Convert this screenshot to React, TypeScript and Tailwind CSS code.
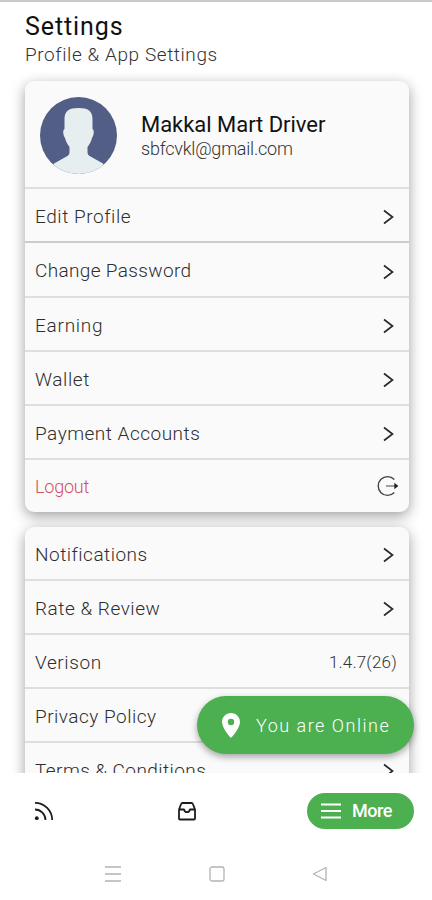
import React from "react";
import clsx from "clsx";

interface Row {
  label: string;
  tracking: string;
  height: string;
  kind?: "link" | "logout" | "version";
  divider?: string;
}

const accountRows: Row[] = [
  { label: "Edit Profile", tracking: "tracking-[0.56px]", height: "h-[54px]", divider: "border-[#cbcbcb]" },
  { label: "Change Password", tracking: "tracking-[0.35px]", height: "h-[55px]" },
  { label: "Earning", tracking: "tracking-[0.75px]", height: "h-[54px]" },
  { label: "Wallet", tracking: "tracking-[0.6px]", height: "h-[54px]" },
  { label: "Payment Accounts", tracking: "tracking-[0.5px]", height: "h-[54px]" },
  { label: "Logout", tracking: "tracking-[-0.2px]", height: "h-[52px]", kind: "logout", divider: "border-transparent" },
];

const appRows: Row[] = [
  { label: "Notifications", tracking: "tracking-[0.5px]", height: "h-[54px]" },
  { label: "Rate & Review", tracking: "tracking-[0.53px]", height: "h-[54px]" },
  { label: "Verison", tracking: "tracking-[0.6px]", height: "h-[54px]", kind: "version" },
  { label: "Privacy Policy", tracking: "tracking-[0.5px]", height: "h-[54px]" },
  { label: "Terms & Conditions", tracking: "tracking-[0.43px]", height: "h-[54px]" },
];

const Chevron = () => (
  <svg className="mr-[14px] h-4 w-3" viewBox="0 0 12 16" fill="none" stroke="#2a2a2a" strokeWidth="1.7">
    <path d="M1 1.5 9.5 8 1 14.5" />
  </svg>
);

const LogoutIcon = () => (
  <svg className="mr-[10px] h-[22px] w-[22px]" viewBox="0 0 22 22" fill="none" stroke="#444" strokeWidth="1.4">
    <path d="M17.3 4.4A9.4 9.4 0 1 0 17.3 17.6" />
    <path d="M9 11h10" strokeWidth="1.1" />
    <path d="M17.3 7.8 21.4 11l-4.1 3.2z" fill="#222" stroke="none" />
  </svg>
);

const SettingsRow = ({ label, tracking, height, kind = "link", divider = "border-[#dedede]" }: Row) => (
  <div
    className={clsx(
      "flex items-center justify-between border-b-2 pl-[10px]",
      kind === "logout" ? "pt-[2px]" : "pt-[4px]",
      height,
      divider
    )}
  >
    <span
      className={clsx(
        "font-light whitespace-nowrap",
        tracking,
        kind === "logout" ? "text-[18px] text-[#d4505c]" : "text-[19px] text-[#2e2e2e]"
      )}
    >
      {label}
    </span>
    {kind === "link" && <Chevron />}
    {kind === "logout" && <LogoutIcon />}
    {kind === "version" && (
      <span className="mr-[12px] text-[17px] font-light tracking-[0.2px] text-[#333]">1.4.7(26)</span>
    )}
  </div>
);

const card = "mr-[23px] ml-[25px] overflow-hidden rounded-[9px] bg-[#fafafa] shadow-[0_4px_14px_rgba(0,0,0,0.38)]";

export default function App() {
  return (
    <div className="relative flex h-[900px] w-[432px] flex-col overflow-hidden bg-white font-['Roboto','Liberation_Sans',sans-serif]">
      <main className="h-[773px] overflow-hidden border-t-2 border-[#cacaca]">
        <header className="h-[79px] pt-[9px] pl-[25px]">
          <h1 className="text-[25px] leading-[32px] tracking-[0.9px] text-[#111]">Settings</h1>
          <p className="text-[19px] leading-[24px] font-light tracking-[0.58px] text-[#333]">Profile &amp; App Settings</p>
        </header>

        <section className={card}>
          <div className="flex h-[108px] border-b-2 border-[#dedede] pt-[16px] pl-[15px]">
            <svg className="h-[77px] w-[77px]" viewBox="0 0 77 77">
              <defs>
                <clipPath id="avatar">
                  <circle cx="38.5" cy="38.5" r="38.5" />
                </clipPath>
              </defs>
              <g clipPath="url(#avatar)">
                <rect width="77" height="77" fill="#525e86" />
                <path
                  d="M38.5 11C29 11 24.5 14 24.5 22v10c-2 1-1.500 6 .5 9 1 4 2.500 6.500 4.500 9v5c0 2-1 3.500-3 4.500L14 66.500 10 77h57l-4-10.500L50.500 59.500c-2-1-3-2.500-3-4.500v-5c2-2.500 3.500-5 4.500-9 2-3 2.500-8 .5-9V22c0-8-4.500-11-14-11z"
                  fill="#e6eeef"
                />
              </g>
            </svg>
            <div className="pt-[15px] pl-[24px]">
              <p className="text-[22px] leading-[26px] tracking-[-0.03px] text-[#111]">Makkal Mart Driver</p>
              <p className="text-[18px] leading-[22px] font-light tracking-[-0.22px] text-[#333]">sbfcvkl@gmail.com</p>
            </div>
          </div>
          {accountRows.map((row) => (
            <SettingsRow key={row.label} {...row} />
          ))}
        </section>

        <section className={clsx(card, "mt-[15px]")}>
          {appRows.map((row) => (
            <SettingsRow key={row.label} {...row} />
          ))}
        </section>
      </main>

      {/* Floating status pill */}
      <div className="absolute top-[696px] left-[197px] flex h-[58px] w-[217px] items-center rounded-full bg-[#4caf50] pl-[25px] text-white shadow-[0_3px_7px_rgba(0,0,0,0.35)]">
        <svg className="h-[25px] w-[18px]" viewBox="0 0 18 25" fill="currentColor" fillRule="evenodd">
          <path d="M9 0C4 0 0 4 0 9c0 6.500 9 16 9 16s9-9.500 9-16c0-5-4-9-9-9zm0 5.800a3.200 3.200 0 1 1 0 6.400 3.200 3.200 0 0 1 0-6.400z" />
        </svg>
        <span className="ml-[16px] text-[18px] font-light tracking-[1.5px] whitespace-nowrap">You are Online</span>
      </div>

      <nav className="relative flex h-[75px] items-center justify-between bg-white pr-[18px] pl-[34px]">
        <svg className="h-[20px] w-[20px]" viewBox="0 0 20 20" fill="none" stroke="#1c1c1c" strokeWidth="1.8">
          <path d="M1 1.8c9.500 0 17.200 7.700 17.200 17.200M1 8.500c5.800 0 10.500 4.700 10.500 10.500" />
          <circle cx="2.8" cy="17.2" r="1.9" fill="#1c1c1c" stroke="none" />
        </svg>
        <svg className="ml-[12px] h-[20px] w-[20px]" viewBox="0 0 20 20" fill="none" stroke="#1c1c1c" strokeWidth="1.8" strokeLinejoin="round">
          <path d="M5.500 2h9a1.500 1.500 0 0 1 1.400 1L18 8.500v9a1 1 0 0 1-1 1H3a1 1 0 0 1-1-1v-9L4.100 3a1.500 1.500 0 0 1 1.400-1zM2 8.500h5c.5 1.800 1.500 2.700 3 2.700s2.500-.9 3-2.700h5" />
        </svg>
        <button className="flex h-[36px] w-[107px] items-center rounded-full bg-[#4caf50] pl-[14px] text-white">
          <svg className="h-4 w-5" viewBox="0 0 20 16" stroke="currentColor" strokeWidth="1.8">
            <path d="M0 1.500h20M0 8h20M0 14.500h20" />
          </svg>
          <span className="ml-[11px] text-[18px] font-medium tracking-[-0.5px]">More</span>
        </button>
      </nav>

      {/* System buttons */}
      <div className="flex h-[52px] items-center justify-between bg-white pr-[104px] pl-[105px]">
        <svg className="h-4 w-4" viewBox="0 0 16 16" stroke="#b3b3b3" strokeWidth="1.3">
          <path d="M0 1h16M0 8h16M0 15h16" />
        </svg>
        <svg className="h-4 w-4" viewBox="0 0 16 16" fill="none" stroke="#b3b3b3" strokeWidth="1.3">
          <rect x="1" y="1" width="14" height="14" rx="2" />
        </svg>
        <svg className="h-4 w-4" viewBox="0 0 16 16" fill="none" stroke="#b3b3b3" strokeWidth="1.3" strokeLinejoin="round">
          <path d="M14 1.500v13L1.500 8z" />
        </svg>
      </div>
    </div>
  );
}
